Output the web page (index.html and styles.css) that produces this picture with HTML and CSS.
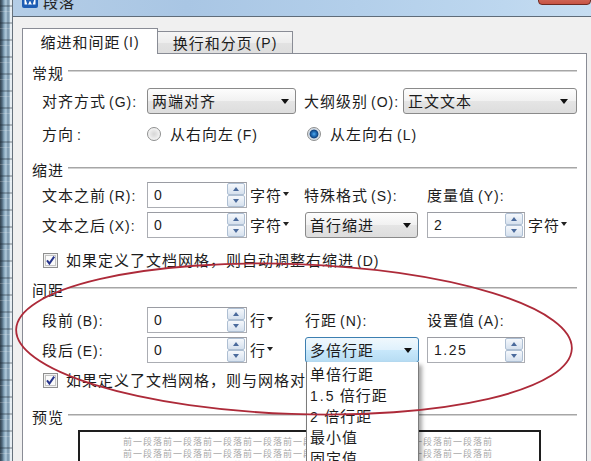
FILE: index.html
```html
<!DOCTYPE html>
<html lang="zh-CN">
<head>
<meta charset="utf-8">
<title>段落</title>
<link rel="stylesheet" href="styles.css">
</head>
<body>
<div class="win">
  <div class="frame-left"></div>
  <div class="col">
    <div class="titlebar">
      <svg class="logo" width="16" height="16" viewBox="0 0 16 16">
        <rect x="0" y="0" width="16" height="16" rx="2" fill="#1d5db4"/>
        <rect x="2.5" y="2.5" width="11" height="10" fill="#fff"/>
        <polyline points="3.5,4 5.8,11 8,6.5 10.2,11 12.5,4" fill="none" stroke="#1d5db4" stroke-width="1.8"/>
      </svg>
      <span class="title">段落</span>
      <span class="close"></span>
    </div>
    <div class="client">
      <div class="tabs">
        <div class="tab active">缩进和间距<span class="k">(I)</span></div>
        <div class="tab">换行和分页<span class="k">(P)</span></div>
      </div>
      <div class="panel">
        <div class="sec s-gen"><span class="sec-t">常规</span><span class="sec-line"></span></div>
        <div class="row row-align">
          <span class="lbl lbl-main">对齐方式<span class="k">(G):</span></span>
          <div class="sel sel-align"><span>两端对齐</span></div>
          <span class="lbl lbl-outline">大纲级别<span class="k">(O):</span></span>
          <div class="sel sel-outline"><span>正文文本</span></div>
        </div>
        <div class="row row-dir">
          <span class="lbl lbl-main">方向<span class="k">:</span></span>
          <span class="radio radio-rtl"><span class="dot"></span><span class="lbl">从右向左<span class="k">(F)</span></span></span>
          <span class="radio"><span class="dot on"></span><span class="lbl">从左向右<span class="k">(L)</span></span></span>
        </div>

        <div class="sec s-ind"><span class="sec-t">缩进</span><span class="sec-line"></span></div>
        <div class="row row-ind1">
          <span class="lbl lbl-main">文本之前<span class="k">(R):</span></span>
          <div class="inp"><span class="val">0</span><span class="spin"><i class="up"></i><i class="dn"></i></span></div>
          <span class="unit">字符</span>
          <span class="lbl lbl-col2">特殊格式<span class="k">(S):</span></span>
          <span class="lbl">度量值<span class="k">(Y):</span></span>
        </div>
        <div class="row row-ind2">
          <span class="lbl lbl-main">文本之后<span class="k">(X):</span></span>
          <div class="inp"><span class="val">0</span><span class="spin"><i class="up"></i><i class="dn"></i></span></div>
          <span class="unit unit-wide">字符</span>
          <div class="sel sel-special"><span>首行缩进</span></div>
          <div class="inp inp-r"><span class="val">2</span><span class="spin"><i class="up"></i><i class="dn"></i></span></div>
          <span class="unit">字符</span>
        </div>
        <div class="row chk-row chk-ind">
          <svg class="cb" width="15" height="15" viewBox="0 0 15 15">
            <rect x="0.5" y="0.5" width="14" height="14" fill="#f2f2f2" stroke="#8f8f8f"/>
            <rect x="2.5" y="2.5" width="10" height="10" fill="#fbfbfb" stroke="#c4c4c4"/>
            <path d="M4 7.4 L6.4 10.6 L11.2 3.6" fill="none" stroke="#26348c" stroke-width="2"/>
          </svg>
          <span class="lbl chk-text">如果定义了文档网格，则自动调整右缩进<span class="k">(D)</span></span>
        </div>

        <div class="sec s-spc"><span class="sec-t">间距</span><span class="sec-line"></span></div>
        <div class="row row-spc1">
          <span class="lbl lbl-main">段前<span class="k">(B):</span></span>
          <div class="inp"><span class="val">0</span><span class="spin"><i class="up"></i><i class="dn"></i></span></div>
          <span class="unit unit-wide">行</span>
          <span class="lbl lbl-col2b">行距<span class="k">(N):</span></span>
          <span class="lbl">设置值<span class="k">(A):</span></span>
        </div>
        <div class="row row-spc2">
          <span class="lbl lbl-main">段后<span class="k">(E):</span></span>
          <div class="inp"><span class="val">0</span><span class="spin"><i class="up"></i><i class="dn"></i></span></div>
          <span class="unit unit-wide">行</span>
          <div class="sel sel-focus sel-spacing"><span>多倍行距</span></div>
          <div class="inp inp-r2"><span class="val val-mono">1.25</span><span class="spin"><i class="up"></i><i class="dn"></i></span></div>
        </div>
        <div class="row chk-row chk-spc">
          <svg class="cb" width="15" height="15" viewBox="0 0 15 15">
            <rect x="0.5" y="0.5" width="14" height="14" fill="#f2f2f2" stroke="#8f8f8f"/>
            <rect x="2.5" y="2.5" width="10" height="10" fill="#fbfbfb" stroke="#c4c4c4"/>
            <path d="M4 7.4 L6.4 10.6 L11.2 3.6" fill="none" stroke="#26348c" stroke-width="2"/>
          </svg>
          <span class="lbl chk-text">如果定义了文档网格，则与网格对齐<span class="k">(W)</span></span>
        </div>

        <div class="sec s-prev"><span class="sec-t">预览</span><span class="sec-line"></span></div>
        <div class="preview">
          <div class="pv-line">前一段落前一段落前一段落前一段落前一段落前一段落前一段落前一段落前一段落前</div>
          <div class="pv-line">前一段落前一段落前一段落前一段落前一段落前一段落前一段落前一段落前一段落前</div>
          <div class="pv-line">前一段落前一段落前一段落前一段落前一段落前一段落前一段落前一段落前一段落前</div>
        </div>
      </div>
    </div>
  </div>

  <div class="dropdown">
    <div class="dd-item">单倍行距</div>
    <div class="dd-item"><span class="num">1.5</span> 倍行距</div>
    <div class="dd-item"><span class="num">2</span> 倍行距</div>
    <div class="dd-item">最小值</div>
    <div class="dd-item">固定值</div>
  </div>

  <svg class="mark" width="591" height="461" viewBox="0 0 591 461">
    <ellipse cx="294" cy="339" rx="278" ry="75" transform="rotate(2 294 339)" fill="none" stroke="#ad2a39" stroke-width="1.8"/>
  </svg>
</div>
</body>
</html>
```

FILE: styles.css
```css
* { box-sizing: border-box; }
html, body { margin: 0; padding: 0; }
body {
  width: 591px;
  height: 461px;
  overflow: hidden;
  background: #f0f0f0;
  font-family: "Noto Sans CJK SC", "Noto Sans", sans-serif;
  font-size: 15px;
  line-height: 20px;
  color: #1c1c1c;
}
.win {
  position: relative;
  display: flex;
  width: 591px;
  height: 461px;
  overflow: hidden;
}
.frame-left {
  flex: none;
  width: 13px;
  height: 100%;
  border-right: 1px solid #66717c;
  background:
    repeating-linear-gradient(to bottom, rgba(0,0,0,0) 0 5px, rgba(25,35,45,.28) 5px 7px, rgba(0,0,0,0) 7px 11px, rgba(255,255,255,.2) 11px 12px, rgba(0,0,0,0) 12px 17px),
    linear-gradient(to right, #34434f 0, #4d6579 2px, #87a7bd 4px, #b2cbdc 6px, #7390a7 8px, #9fb8c9 9.5px, #e6edf2 10px, #e6edf2 12px);
}
.col {
  flex: 1;
  display: flex;
  flex-direction: column;
  min-width: 0;
}
.titlebar {
  flex: none;
  height: 17px;
  display: flex;
  align-items: flex-start;
  padding-left: 9px;
  background: linear-gradient(to right, #b4cde6 0%, #a9c6e4 30%, #b3cfea 60%, #bdd7ef 85%, #c6ddf1 100%);
  border-bottom: 1px solid #5f6c79;
}
.logo { flex: none; margin-top: -8px; }
.title {
  margin-left: 5px;
  margin-top: -8px;
  letter-spacing: 1px;
  color: #222;
}
.close {
  margin-left: auto;
  width: 53px;
  height: 20px;
  margin-top: -15px;
  background: linear-gradient(#e29a8c, #c75343);
  border: 1px solid #6e2a22;
  border-radius: 0 0 4px 4px;
}
.client {
  flex: 1;
  display: flex;
  flex-direction: column;
  padding: 11px 4px 0 9px;
  min-height: 0;
}
.tabs {
  flex: none;
  display: flex;
  align-items: flex-end;
  height: 26px;
  margin-bottom: -1px;
  position: relative;
  z-index: 1;
}
.tab {
  width: 135px;
  height: 23px;
  border: 1px solid #898c95;
  border-left: none;
  background: linear-gradient(#f5f5f5, #ededed 50%, #e2e2e2 51%, #dedede);
  display: flex;
  align-items: center;
  justify-content: center;
  letter-spacing: 1px;
  white-space: nowrap;
}
.tab.active {
  width: 136px;
  height: 26px;
  border-left: 1px solid #898c95;
  border-bottom: none;
  background: #fff;
}
.panel {
  flex: none;
  height: 430px;
  border: 1px solid #898c95;
  background: #fff;
  padding: 8px 9px 0 9px;
}
.k {
  font-family: "Liberation Sans", sans-serif;
  font-size: 14px;
  letter-spacing: 1px;
  margin-left: 3px;
}
.sec {
  display: flex;
  align-items: center;
  height: 22px;
}
.sec-t { letter-spacing: 1px; }
.sec-line {
  flex: 1;
  height: 2px;
  margin: 0 0 5px 4px;
  background: linear-gradient(#a6a6a6 50%, #d2d2d2 50%);
}
.row {
  display: flex;
  align-items: center;
  height: 26px;
  padding-left: 10px;
}
.lbl {
  flex: none;
  letter-spacing: 1px;
  white-space: nowrap;
}
.lbl-main { width: 105px; }
.lbl-outline { width: 99px; margin-left: 8px; }
.lbl-col2 { width: 123px; }
.lbl-col2b { width: 122px; }

/* vertical rhythm */
.row-align { margin-top: 4px; }
.row-dir { margin-top: 7px; }
.s-ind { margin-top: 12px; }
.row-ind1 { margin-top: 1px; }
.row-ind2 { margin-top: 4px; }
.chk-ind { margin-top: 10px; }
.s-spc { margin-top: 7px; }
.row-spc1 { margin-top: 6px; }
.row-spc2 { margin-top: 4px; }
.chk-spc { margin-top: 5px; }
.s-prev { margin-top: 14px; }

/* selects */
.sel {
  flex: none;
  height: 26px;
  border: 1px solid #8a8a8a;
  border-radius: 3px;
  background: linear-gradient(#fdfdfd, #f1f1f1 50%, #e5e5e5 51%, #dddddd);
  display: flex;
  align-items: center;
  justify-content: space-between;
  padding: 0 6px 0 4px;
  letter-spacing: 1px;
  white-space: nowrap;
}
.sel::after {
  content: "";
  border-left: 4px solid transparent;
  border-right: 4px solid transparent;
  border-top: 5px solid #111;
}
.sel-focus {
  border-color: #3c7fb1;
  background: linear-gradient(#f0f8fd, #dff1fc 50%, #c8e8fb 51%, #b6dcf3);
}
.sel-align { width: 149px; }
.sel-outline { width: 174px; padding-right: 8px; }
.sel-special { width: 113px; }
.sel-spacing { width: 114px; }

/* radios */
.radio {
  flex: none;
  display: flex;
  align-items: center;
  gap: 9px;
}
.radio-rtl { width: 160px; }
.dot {
  width: 14px;
  height: 14px;
  border-radius: 50%;
  border: 1px solid #8e8f8f;
  background: radial-gradient(circle, #d6d6d6 0, #e6e6e6 40%, #f7f7f7 75%);
}
.dot.on {
  background: radial-gradient(circle, #5aaee8 0, #2a7cc8 1.6px, #0f427f 4px, #cfd8e2 4.8px, #f2f4f6 100%);
}

/* inputs */
.inp {
  flex: none;
  width: 100px;
  height: 26px;
  border: 1px solid #abadb3;
  border-top-color: #9a9ca3;
  background: #fff;
  display: flex;
  align-items: center;
  justify-content: space-between;
  padding: 0 1px 0 6px;
}
.inp-r { width: 98px; margin-left: 9px; }
.inp-r2 { width: 98px; margin-left: 8px; }
.val {
  font-family: "Liberation Sans", sans-serif;
  font-size: 14px;
}
.val-mono { letter-spacing: 1.5px; }
.spin {
  flex: none;
  width: 18px;
  height: 24px;
  display: flex;
  flex-direction: column;
}
.spin i {
  flex: 1;
  border: 1px solid #aebfd3;
  border-radius: 2px;
  background: linear-gradient(#f5f8fc, #d6e1ee);
  display: flex;
  align-items: center;
  justify-content: center;
}
.spin i::after {
  content: "";
  border-left: 3.5px solid transparent;
  border-right: 3.5px solid transparent;
  border-bottom: 4px solid #4a6a9c;
}
.spin i.dn::after {
  border-bottom: none;
  border-top: 4px solid #4a6a9c;
}

/* unit labels with small arrow */
.unit {
  flex: none;
  width: 54px;
  margin-left: 3px;
  display: flex;
  align-items: center;
  letter-spacing: 1px;
  white-space: nowrap;
}
.unit::after {
  content: "";
  margin-left: 1px;
  margin-top: -2px;
  border-left: 3px solid transparent;
  border-right: 3px solid transparent;
  border-top: 4px solid #222;
}
.unit-wide { width: 55px; }

/* checkboxes */
.chk-row {
  height: 24px;
  padding-left: 11px;
}
.cb { flex: none; }
.chk-text { margin-left: 8px; }

/* preview */
.preview {
  margin-top: 2px;
  margin-left: 46px;
  width: 463px;
  height: 50px;
  border: 2px solid #1e1e1e;
  padding: 4px 0 0 43px;
  overflow: hidden;
}
.pv-line {
  width: 372px;
  overflow: hidden;
  white-space: nowrap;
  font-size: 9px;
  line-height: 12px;
  letter-spacing: 1px;
  color: #a8a8a8;
}

/* dropdown list */
.dropdown {
  position: absolute;
  left: 306px;
  top: 362px;
  width: 113px;
  height: 112px;
  background: #fff;
  border: 1px solid #7b7b7b;
  border-top: none;
  box-shadow: 3px 3px 4px rgba(0,0,0,.35);
  padding-top: 1px;
  z-index: 2;
}
.dd-item {
  height: 21px;
  line-height: 21px;
  padding-left: 3px;
  letter-spacing: 1px;
  white-space: nowrap;
}
.num {
  font-family: "Liberation Sans", sans-serif;
  font-size: 14px;
  letter-spacing: 2px;
}

/* red annotation ellipse */
.mark {
  position: absolute;
  left: 0;
  top: 0;
  z-index: 3;
  pointer-events: none;
}
```
